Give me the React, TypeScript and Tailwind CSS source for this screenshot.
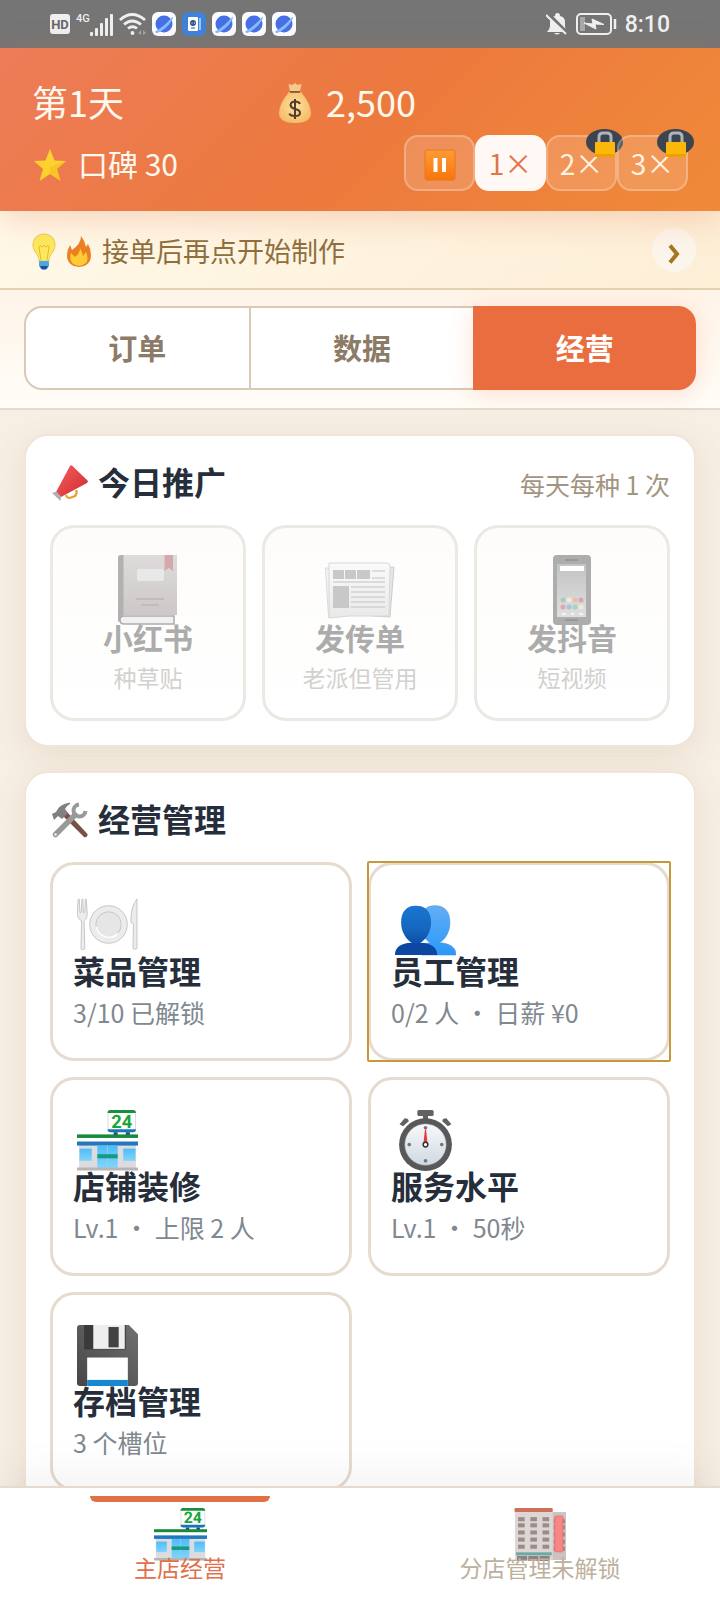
import type { ReactNode } from "react";

type IconProps = { className?: string };

const StoreIcon = ({ className }: IconProps) => (
    <svg viewBox="0 0 60 60" className={className} aria-hidden="true">
        <defs>
            <linearGradient id="storeGlass" x1="0" y1="0" x2="0" y2="1">
                <stop offset="0" stopColor="#4fbcf7" />
                <stop offset="1" stopColor="#81d4fa" />
            </linearGradient>
        </defs>
        <path d="M36 20h4v5h-4zM48 20h4v5h-4z" fill="#1b4f7d" />
        <rect x="30.500" y="0.500" width="27" height="21" rx="2.500" fill="#fff" stroke="#ddd" />
        <path d="M30 3q0-3 3-3h22q3 0 3 3z" fill="#17903b" />
        <path d="M30 19h28q0 3-3 3H33q-3 0-3-3z" fill="#1b74b8" />
        <text x="44" y="17.500" textAnchor="middle" fontSize="18" fontWeight="700" fill="#18a53a" className="font-[Roboto,sans-serif]" textRendering="geometricPrecision">24</text>
        <rect x="2" y="33" width="56" height="24" fill="#dcdce0" />
        <rect x="0" y="24" width="60" height="4" fill="#198a3b" />
        <rect x="0" y="27.500" width="60" height="4" fill="#fff" />
        <rect x="0" y="31" width="60" height="4" fill="#2178bd" />
        <rect x="2.500" y="38" width="12" height="12" fill="url(#storeGlass)" />
        <rect x="45.500" y="38" width="12" height="12" fill="url(#storeGlass)" />
        <rect x="20" y="35" width="20" height="22" fill="url(#storeGlass)" />
        <path d="M30 35v21" stroke="#82d7fb" strokeWidth="0.800" />
        <rect x="20" y="43.500" width="20" height="4" fill="#159b80" />
        <rect x="0" y="56.500" width="60" height="3" rx="0.500" fill="#b5b5b5" />
    </svg>
);

const OfficeIcon = ({ className }: IconProps) => (
    <svg viewBox="0 0 52 52" className={className} aria-hidden="true">
        <rect x="37" y="4" width="14" height="47" fill="#cbc2c1" />
        <rect x="1" y="2" width="37" height="49" fill="#ddd6d5" />
        <rect x="0.500" y="0" width="37.500" height="4" rx="1" fill="#cd7259" />
        {[9, 15, 22, 29, 36].map((y) => (
            <g key={y} fill="#9c8c89">
                <rect x="4" y={y} width="6.500" height="4" />
                <rect x="16" y={y} width="6.500" height="4" />
                <rect x="28" y={y} width="6.500" height="4" />
                <rect x="39" y={y + 2} width="11" height="4" />
            </g>
        ))}
        <rect x="40" y="8" width="8" height="35" rx="1" fill="#fa8585" stroke="#e07070" strokeWidth="0.800" />
        <rect x="2" y="43.500" width="35" height="3" fill="#69aaa4" />
        <path d="M3 47h10v5H3zM14 47h10v5H14zM25 47h10v5H25z" fill="#90807d" />
    </svg>
);

const PlateIcon = ({ className }: IconProps) => (
    <svg viewBox="0 0 60 60" className={className} aria-hidden="true">
        <g fill="#ececec" stroke="#b5b5b5" strokeWidth="0.700">
            <path d="M1 5l.5-1 .8 0 .6 13h1.400l.5-13h1l.5 13h1.400l.5-13 .8 0 1 12c.4 6-1 8-3 9.500L7.700 53q-1.900 1.500-3.800 0l.6-27.500C1.700 24 .4 22 .4 17z" />
            <circle cx="31" cy="29" r="18.500" />
            <path d="M59 4q-6.500 8-6 23l2.500 1.500-.4 24q2 2 3.900 0z" />
        </g>
        <circle cx="31" cy="29" r="12.500" fill="#e6e6e6" stroke="#c0c0c0" strokeWidth="0.800" />
        <path d="M19 31a12.500 12.500 0 0 0 21 7" fill="none" stroke="#fff" strokeWidth="1.500" />
    </svg>
);

const PeopleIcon = ({ className }: IconProps) => (
    <svg viewBox="0 0 60 60" className={className} aria-hidden="true">
        <defs>
            <linearGradient id="peopleFront" x1="0" y1="0" x2="0" y2="1">
                <stop offset="0" stopColor="#1976d2" />
                <stop offset="0.600" stopColor="#1467bd" />
                <stop offset="1" stopColor="#0e4ba8" />
            </linearGradient>
            <linearGradient id="peopleBack" x1="0" y1="0" x2="0" y2="1">
                <stop offset="0" stopColor="#63aef5" />
                <stop offset="1" stopColor="#2a98fb" />
            </linearGradient>
        </defs>
        <path d="M39 10.500c10 0 15 6 15 16.500 0 10-5 17-10.500 20 10 .5 16.500 4 16.500 12H26V48l9-1C29 44 25 37 25 27c0-10.500 5-16.500 14-16.500z" fill="url(#peopleBack)" stroke="#4a90d2" strokeWidth="0.600" />
        <path d="M20.500 10.500C30.500 10.500 35.500 16.500 35.500 27c0 10-5.500 17-10.500 20v2h-8.500v-2C11.500 44 6 37 6 27c0-10.500 5-16.500 14.500-16.500z" fill="url(#peopleFront)" />
        <path d="M16 47q4.500 2 9 0c10 .5 16.500 4 16.500 12H0c0-8 6-11.500 16-12z" fill="#0d47a1" />
    </svg>
);

const StopwatchIcon = ({ className }: IconProps) => (
    <svg viewBox="0 0 60 60" className={className} aria-hidden="true">
        <defs>
            <linearGradient id="watchFace" x1="0" y1="0" x2="0" y2="1">
                <stop offset="0" stopColor="#f7f9fb" />
                <stop offset="1" stopColor="#cfd9e2" />
            </linearGradient>
        </defs>
        <g fill="#626262">
            <rect x="22" y="0" width="16" height="6" rx="1.500" />
            <rect x="27.500" y="4" width="5" height="6" />
            <path d="M4.500 14l5-6q4 0 4 3L8 16zM55.500 14l-5-6q-4 0-4 3l5.500 5z" />
        </g>
        <circle cx="30" cy="34" r="26" fill="#585858" />
        <circle cx="30" cy="34" r="20.500" fill="url(#watchFace)" stroke="#777" strokeWidth="0.600" />
        <g fill="#757575">
            <circle cx="30" cy="17.500" r="1.800" />
            <circle cx="30" cy="50" r="1.800" />
            <circle cx="14" cy="34" r="1.800" />
            <circle cx="46" cy="34" r="1.800" />
        </g>
        <path d="M29.500 19h1l1.500 14h-4z" fill="#e53935" />
        <circle cx="30" cy="34" r="2.300" fill="#fff" stroke="#333" strokeWidth="1.500" />
    </svg>
);

const FloppyIcon = ({ className }: IconProps) => (
    <svg viewBox="0 0 60 60" className={className} aria-hidden="true">
        <defs>
            <linearGradient id="floppyBody" x1="1" y1="0" x2="0" y2="1">
                <stop offset="0" stopColor="#707070" />
                <stop offset="1" stopColor="#464646" />
            </linearGradient>
        </defs>
        <path d="M3 0h48l9 9v48q0 3-3 3H3q-3 0-3-3V3q0-3 3-3z" fill="url(#floppyBody)" />
        <rect x="7" y="0" width="41" height="24" fill="#3a3a3a" />
        <rect x="16" y="0" width="31" height="23.500" fill="#eee" />
        <rect x="31" y="2" width="10" height="20" fill="#424242" />
        <rect x="10" y="32" width="40" height="28" fill="#fff" />
        <rect x="10" y="54" width="40" height="6" fill="#1687d0" />
    </svg>
);

const BookIcon = ({ className }: IconProps) => (
    <svg viewBox="0 0 70 70" className={className} aria-hidden="true">
        <defs>
            <linearGradient id="bookCover" x1="0" y1="0" x2="0" y2="1">
                <stop offset="0" stopColor="#dedbda" />
                <stop offset="1" stopColor="#cbc6c5" />
            </linearGradient>
        </defs>
        <path d="M8 0h56v60H10l-5 6V3q0-3 3-3z" fill="url(#bookCover)" />
        <path d="M8 0h2.500v60q-4 2-3 6l-2.500 1V3q0-3 3-3z" fill="#b2b0b0" />
        <path d="M61 61H11q-4 0-4 4 0 4 4 4h50z" fill="#f1f1f1" stroke="#adadad" strokeWidth="1.500" />
        <path d="M51.500 0H60v16l-4.200-3-4.300 3z" fill="#d4a9ab" />
        <rect x="24" y="14" width="27" height="12" rx="2" fill="#e9e8e8" />
        <path d="M23 44h28M28 50h18" stroke="#b0adac" strokeWidth="1.200" />
    </svg>
);

const NewspaperIcon = ({ className }: IconProps) => (
    <svg viewBox="0 0 70 70" className={className} aria-hidden="true">
        <defs>
            <linearGradient id="paper" x1="0" y1="0" x2="0" y2="1">
                <stop offset="0" stopColor="#fafafa" />
                <stop offset="1" stopColor="#e9e9e9" />
            </linearGradient>
        </defs>
        <path d="M10 12l59 0-4 50-18-1z" fill="#e6e6e6" stroke="#cdcdcd" />
        <path d="M0.500 13l3 49 10-1V13z" fill="#f2f2f2" stroke="#dcdcdc" />
        <path d="M4 8h58q3 0 3 4l-1 47q-1 2-4 2H24L4 63z" fill="url(#paper)" stroke="#d8d8d8" />
        <path d="M8 15h11v9H8zM20 15h11v9H20zM32 15h13v9H32zM8 31h16v22H8z" fill="#c8c8c8" />
        <path d="M47 16h13M47 23h13M8 27h52M26 32h34M26 37h34M26 42h34M26 47h34M26 52h34" stroke="#c2c2c2" strokeWidth="1.200" />
    </svg>
);

const PhoneIcon = ({ className }: IconProps) => (
    <svg viewBox="0 0 70 70" className={className} aria-hidden="true">
        <defs>
            <linearGradient id="phoneScreen" x1="0" y1="0" x2="0" y2="1">
                <stop offset="0" stopColor="#c2c3c4" />
                <stop offset="1" stopColor="#dfdfdf" />
            </linearGradient>
        </defs>
        <rect x="16" y="0" width="38" height="70" rx="4" fill="#adadad" />
        <rect x="20" y="9" width="29" height="53" fill="url(#phoneScreen)" />
        <rect x="23" y="11" width="24" height="5" fill="#fff" />
        <path d="M28 5h13M28 65h13" stroke="#989898" strokeWidth="2" />
        <circle cx="26" cy="45" r="2.500" fill="#a8cdbd" />
        <circle cx="32" cy="45" r="2.500" fill="#f4ead0" />
        <circle cx="38" cy="45" r="2.500" fill="#e8bfa9" />
        <circle cx="44" cy="45" r="2.500" fill="#d9a5a8" />
        <circle cx="26" cy="52" r="2.500" fill="#dda9ad" />
        <circle cx="32" cy="52" r="2.500" fill="#a9c5d9" />
        <circle cx="38" cy="52" r="2.500" fill="#a8d0c6" />
        <circle cx="44" cy="52" r="2.500" fill="#f4ead0" />
        <path d="M25 59h4M34 59h3M42 59h4" stroke="#f4f4f4" strokeWidth="2" />
    </svg>
);

const MegaphoneIcon = ({ className }: IconProps) => (
    <svg viewBox="0 0 36 36" className={className} aria-hidden="true">
        <defs>
            <linearGradient id="megaphoneCone" x1="0" y1="0" x2="1" y2="1">
                <stop offset="0" stopColor="#f4605c" />
                <stop offset="1" stopColor="#cf2b30" />
            </linearGradient>
        </defs>
        <path d="M14 30q1 4 5 2.500l3-1q3-1 2.500-6.500" fill="none" stroke="#e2a12a" strokeWidth="2.200" />
        <path d="M18 1q1-1.500 2.500 0L35.500 15.500q1 1.500-.5 2.500L9 32l-5-5z" fill="url(#megaphoneCone)" />
        <path d="M0 28l4.500-1.500 4.500 5L8.500 36z" fill="#b0b0b0" />
    </svg>
);

const ToolsIcon = ({ className }: IconProps) => (
    <svg viewBox="0 0 36 36" className={className} aria-hidden="true">
        <path d="M11 14l4-4 20.500 22q.5 3-3 3.500z" fill="#795046" />
        <path d="M0 12l4-2q3-8 14-9.500v1.500q-4 2-5 5l3 4-6 6-4-3-4 4z" fill="#808080" />
        <path d="M3.500 32.500L23 13" stroke="#999" strokeWidth="5.500" strokeLinecap="round" />
        <path d="M27 2.500a6 6 0 1 0 6.500 6.500" fill="none" stroke="#999" strokeWidth="4" />
        <circle cx="3.500" cy="32.500" r="1.300" fill="#eee" />
    </svg>
);

const MoneyBagIcon = () => (
    <svg viewBox="0 0 34 42" className="mt-1 h-[42px] w-[34px]" aria-hidden="true">
        <defs>
            <radialGradient id="bag" cx="0.500" cy="0.450" r="0.600">
                <stop offset="0" stopColor="#ffe0a0" />
                <stop offset="1" stopColor="#f4bb62" />
            </radialGradient>
        </defs>
        <path d="M12 9L10.500 2l4 1L17 1l2.500 2 4-1L22 9z" fill="#f4cb8a" />
        <path d="M11 10h12q10 12 10 21 0 10-16 10T1 31q0-9 10-21z" fill="url(#bag)" />
        <path d="M12 10h10" stroke="#6d4c35" strokeWidth="1.500" />
        <path d="M22 22q-1-2.500-5-2.500t-4.500 3.500Q13 26 17 27q5 1 5 4t-5 3-5.500-2.500M17 17v20" fill="none" stroke="#543b2d" strokeWidth="2" />
    </svg>
);

const StarIcon = () => (
    <svg viewBox="0 0 32 32" className="mt-1 size-8" aria-hidden="true">
        <path d="M16 0l4.500 11.500L32 12l-9 8 3.500 12L16 25 5.500 32 9 20 0 12l11.500-.5z" fill="#fdd22e" />
        <path d="M16 25l10.500 7L23 20l9-8-16 6z" fill="#f3b71c" opacity="0.500" />
    </svg>
);

const BulbIcon = () => (
    <svg viewBox="0 0 24 37" className="mt-1 h-[37px] w-6" aria-hidden="true">
        <path d="M12 1c7 0 11 5 11 11 0 7-6 9-6 16H7C7 21 1 19 1 12 1 6 5 1 12 1z" fill="#fde95c" stroke="#e6cb5a" />
        <path d="M9 27L7 14q2-3 3 0 2-3 4 0 2-3 3 0l-2 13" fill="none" stroke="#e4b840" />
        <path d="M7 28h10v5l-2 3H9l-2-3z" fill="#4fa4e4" />
        <path d="M8 33h8l-2 3.500h-4z" fill="#174f9c" />
    </svg>
);

const FireIcon = () => (
    <svg viewBox="0 0 24 31" className="mt-1 h-[31px] w-6" aria-hidden="true">
        <path d="M14 0q4 5 5 11l2-3q3 5 3 11 0 11-12 12Q0 30 0 19q0-5 3-10l2 5Q14 8 14 0z" fill="#ec7f24" />
        <path d="M13 12q2 4 3 8l3-4q3 7 0 11-7 6-14 0-3-4-1-10l4 4q5-4 5-9z" fill="#fdcb36" />
    </svg>
);

const PauseIcon = () => (
    <svg viewBox="0 0 32 32" className="mt-1 size-8" aria-hidden="true">
        <defs>
            <linearGradient id="pause" x1="0" y1="0" x2="0" y2="1">
                <stop offset="0" stopColor="#ff9b35" />
                <stop offset="1" stopColor="#f97509" />
            </linearGradient>
        </defs>
        <rect x="1" y="1" width="30" height="30" rx="2" fill="url(#pause)" stroke="#e07a28" />
        <path d="M9.500 9h4v14h-4zM18 9h4v14h-4z" fill="#fff" />
    </svg>
);

const LockIcon = () => (
    <svg viewBox="0 0 20 26" className="h-[26px] w-5 shrink-0" aria-hidden="true">
        <path d="M4 12V6q0-4 4-4h4q4 0 4 4v6" fill="none" stroke="#aeb4b8" strokeWidth="3" />
        <rect x="0" y="11" width="20" height="15" rx="1" fill="#fdb708" />
        <path d="M0 23h20v2q0 1-1 1H1q-1 0-1-1z" fill="#eda000" />
    </svg>
);

const PlanetIcon = () => (
    <svg viewBox="0 0 24 24" className="size-6" aria-hidden="true">
        <rect width="24" height="24" rx="6" fill="#fbfdff" />
        <circle cx="12" cy="12" r="8.500" fill="#4670e8" />
        <path d="M3 19.500Q13 14 20.500 4.500q1 1.500-1 4.500-5 8-14 12-2 0-2.500-1.500z" fill="#86bcfb" />
    </svg>
);

const CardAppIcon = () => (
    <svg viewBox="0 0 24 24" className="size-6" aria-hidden="true">
        <rect width="24" height="24" rx="6" fill="#3f82d8" />
        <rect x="6" y="5" width="10" height="14" rx="1" fill="#fff" />
        <path d="M18 6v12" stroke="#bcdcff" strokeWidth="1.500" />
        <circle cx="11" cy="11" r="3" fill="#2d568f" />
        <path d="M9 16h4" stroke="#2d568f" />
        <path d="M9.500 11h1M12 11h1" stroke="#fff" />
    </svg>
);

const StatusBar = () => (
    <div className="flex h-12 shrink-0 items-center justify-between bg-[#757575] px-[50px] text-[#f0f0f0]">
        <div className="flex items-center gap-1.5">
            <span className="flex h-5 w-5 items-center justify-center rounded-[3px] bg-[#efefef] font-[Roboto,sans-serif] text-[13px] leading-none font-bold text-[#666]">HD</span>
            <div className="flex h-[23px] w-[37px] items-start">
                <span className="font-[Roboto,sans-serif] text-[11px] leading-none font-medium">4G</span>
                <svg viewBox="0 0 24 22" className="mt-px h-[22px] w-6 shrink-0" fill="currentColor" aria-hidden="true">
                    <rect x="0" y="18" width="3" height="4" rx="1" />
                    <rect x="5" y="14" width="3" height="8" rx="1" />
                    <rect x="10" y="9" width="3" height="13" rx="1" />
                    <rect x="15" y="4" width="3" height="18" rx="1" />
                    <rect x="20" y="0" width="3" height="22" rx="1" />
                </svg>
            </div>
            <svg viewBox="0 0 27 22" className="h-[22px] w-[27px]" fill="none" stroke="currentColor" strokeWidth="2.800" aria-hidden="true">
                <path d="M1 7q12-11 25 0M5 11.500q8-7 17 0M9 15.500q4.500-3.500 9 0" />
                <circle cx="13.500" cy="20" r="1.200" fill="currentColor" strokeWidth="1.500" />
                <path d="M19 20l3-3v5zM27 20l-3-3v5z" fill="#a5a5a5" stroke="none" />
            </svg>
            <PlanetIcon />
            <CardAppIcon />
            <PlanetIcon />
            <PlanetIcon />
            <PlanetIcon />
        </div>
        <div className="flex items-center gap-2">
            <svg viewBox="0 0 22 22" className="size-[22px]" aria-hidden="true">
                <path d="M1 19q3-3 3-6V9q0-5 5-6 0-3 2.500-3T14 3q5 1 5 6v4q0 4 2 6zM8 20h6q-3 3-6 0z" fill="currentColor" />
                <path d="M1 0l21 21" stroke="#757575" strokeWidth="4" />
                <path d="M0 2l20 19" stroke="currentColor" strokeWidth="2" />
            </svg>
            <svg viewBox="0 0 41 22" className="h-[22px] w-[41px]" aria-hidden="true">
                <rect x="1" y="1" width="34" height="20" rx="4" fill="none" stroke="currentColor" strokeWidth="2" />
                <rect x="4" y="4" width="5" height="14" fill="#a9a9a9" />
                <path d="M8 10l9 1-1-5 12 5.500-9-.5 1 5z" fill="currentColor" stroke="currentColor" />
                <path d="M39 6v10" stroke="currentColor" strokeWidth="2.500" />
            </svg>
            <span className="font-[Roboto,sans-serif] text-[23px] leading-none font-medium">8:10</span>
        </div>
    </div>
);

type SpeedButtonProps = {
    children: ReactNode;
    label: string;
    active?: boolean;
    locked?: boolean;
};

const SpeedButton = ({ children, label, active, locked }: SpeedButtonProps) => (
    <button
        type="button"
        aria-label={label}
        className={`relative flex h-14 w-[71px] items-center justify-center rounded-[14px] border-2 text-[28px] leading-none ${active ? "border-[#fff8f4] bg-[#fff8f4] text-[#e0744c]" : "border-white/25 bg-white/15 text-[#fff3e0]"}`}
    >
        {children}
        {locked && (
            <span className="absolute -top-2 -right-2 flex h-[26px] w-[37px] items-start justify-center rounded-[50%] bg-[#3b444f] pt-0.5">
                <LockIcon />
            </span>
        )}
    </button>
);

const Header = () => (
    <header className="relative z-10 shrink-0 bg-[linear-gradient(135deg,#ed7c58_0%,#ec793d_50%,#f08a39_100%)] px-8 pt-[29px] pb-5 text-[#fff8ee] shadow-[0_8px_32px_rgba(232,109,62,0.25)]">
        <div className="grid h-12 grid-cols-8 items-center text-[36px] leading-none">
            <span className="col-span-3">第1天</span>
            <span className="col-span-5 flex items-center gap-3.5">
                <MoneyBagIcon />
                2,500
            </span>
        </div>
        <div className="mt-2.5 flex items-center justify-between">
            <span className="flex items-center gap-3 pl-0.5 text-[30px] leading-none">
                <StarIcon />
                口碑 30
            </span>
            <div className="flex">
                <SpeedButton label="暂停"><PauseIcon /></SpeedButton>
                <SpeedButton label="1倍速" active>1×</SpeedButton>
                <SpeedButton label="2倍速" locked>2×</SpeedButton>
                <SpeedButton label="3倍速" locked>3×</SpeedButton>
            </div>
        </div>
    </header>
);

const TipBar = () => (
    <div className="flex h-[79px] shrink-0 items-center justify-between border-b-2 border-[#e3d2ae] bg-[linear-gradient(135deg,#fff9e8,#fdeed6)] pr-6 pl-8">
        <div className="flex items-center gap-[11px] text-[27px] leading-none text-[#8f6f3e]">
            <BulbIcon />
            <FireIcon />
            <span className="pt-0.5">接单后再点开始制作</span>
        </div>
        <button type="button" aria-label="下一条" className="flex size-11 items-center justify-center rounded-full bg-[#fcf5ec]">
            <svg viewBox="0 0 12 20" className="mt-2 h-5 w-3" fill="none" stroke="#a5761f" strokeWidth="4" aria-hidden="true">
                <path d="M2 1.500l7 8.500-7 8.500" />
            </svg>
        </button>
    </div>
);

const Tabs = () => (
    <div className="shrink-0 border-b-2 border-[#e5dacd] bg-linear-to-b from-[#fff4e8] to-[#fffdf8] px-6 pt-4 pb-[18px]">
        <div role="tablist" className="flex h-21 text-[29px] font-bold text-[#8c7b66]">
            <button type="button" role="tab" aria-selected="false" className="flex-1 rounded-l-[18px] border-2 border-[#dac9b4] bg-white">订单</button>
            <button type="button" role="tab" aria-selected="false" className="flex-1 border-y-2 border-[#dac9b4] bg-white">数据</button>
            <button type="button" role="tab" aria-selected="true" className="flex-1 rounded-r-[18px] bg-[#e96d3f] text-white shadow-[0_4px_24px_rgba(233,109,63,0.2)]">经营</button>
        </div>
    </div>
);

type PanelProps = {
    icon: ReactNode;
    title: string;
    note?: string;
    children: ReactNode;
};

const Panel = ({ icon, title, note, children }: PanelProps) => (
    <section className="shrink-0 rounded-3xl border-2 border-[#efe5da] bg-white px-6 pt-[25px] pb-6 shadow-[0_8px_32px_rgba(140,100,60,0.12)]">
        <div className="flex h-10 items-center justify-between">
            <h2 className="flex items-center gap-2.5 pl-0.5 text-[32px] leading-none font-bold text-[#252e3a]">
                {icon}
                {title}
            </h2>
            {note && <span className="pt-1.5 text-[25px] leading-none text-[#a29480]">{note}</span>}
        </div>
        {children}
    </section>
);

const promotions = [
    { name: "小红书", desc: "种草贴", Icon: BookIcon },
    { name: "发传单", desc: "老派但管用", Icon: NewspaperIcon },
    { name: "发抖音", desc: "短视频", Icon: PhoneIcon },
];

const managements = [
    { name: "菜品管理", desc: "3/10 已解锁", Icon: PlateIcon },
    { name: "员工管理", desc: "0/2 人 · 日薪 ¥0", Icon: PeopleIcon, highlight: true },
    { name: "店铺装修", desc: "Lv.1 · 上限 2 人", Icon: StoreIcon },
    { name: "服务水平", desc: "Lv.1 · 50秒", Icon: StopwatchIcon },
    { name: "存档管理", desc: "3 个槽位", Icon: FloppyIcon },
];

const BottomNav = () => (
    <nav className="relative z-10 grid shrink-0 grid-cols-2 border-t-2 border-[#e6dacd] bg-white text-[23px] leading-6 shadow-[0_-8px_48px_rgba(0,0,0,0.06)]">
        <a href="#main" className="flex flex-col items-center pt-2 pb-[21px] text-[#e07048]">
            <span className="h-1.5 w-1/2 rounded-b-md bg-[#e17145]" />
            <StoreIcon className="mt-1.5 size-[53px]" />
            <span className="-mt-1.5">主店经营</span>
        </a>
        <a href="#branch" className="flex flex-col items-center pt-5 pb-[21px] text-[#bdb09d]">
            <OfficeIcon className="size-[53px]" />
            <span className="-mt-1.5">分店管理未解锁</span>
        </a>
    </nav>
);

export default function App() {
    return (
        <div lang="zh-CN" className="flex h-screen flex-col overflow-hidden bg-[#f7efe4] font-['Noto_Sans_CJK_SC',sans-serif]">
            <StatusBar />
            <Header />
            <TipBar />
            <Tabs />
            <main className="flex min-h-0 flex-1 flex-col gap-6 overflow-hidden p-6">
                <Panel icon={<MegaphoneIcon className="mt-1 size-9" />} title="今日推广" note="每天每种 1 次">
                    <div className="mt-6 grid grid-cols-3 gap-4">
                        {promotions.map(({ name, desc, Icon }) => (
                            <button key={name} type="button" disabled className="flex flex-col items-center rounded-3xl border-3 border-[#ece8e3] bg-linear-to-b from-[#fdfcfa] to-white pt-[27px] pb-[26px]">
                                <Icon className="size-[70px]" />
                                <span className="-mt-[3px] text-[30px] leading-[30px] font-bold text-[#acacac]">{name}</span>
                                <span className="mt-2.5 text-[23px] leading-[30px] text-[#d2d1cf]">{desc}</span>
                            </button>
                        ))}
                    </div>
                </Panel>
                <Panel icon={<ToolsIcon className="mt-1 size-9" />} title="经营管理">
                    <div className="mt-6 grid grid-cols-2 gap-4">
                        {managements.map(({ name, desc, Icon, highlight }) => (
                            <button key={name} type="button" className="relative flex flex-col items-start rounded-3xl border-3 border-[#e6dbcf] bg-white px-5 pt-[30px] pb-[30px] text-left">
                                <Icon className="ml-1 size-[61px]" />
                                <span className="-mt-0.5 text-[32px] leading-8 font-bold text-[#252e3a]">{name}</span>
                                <span className="mt-2.5 text-[25px] leading-8 text-[#808890]">{desc}</span>
                                {highlight && <span className="absolute -inset-1 rounded-xs border-2 border-[#c8993a]" />}
                            </button>
                        ))}
                    </div>
                </Panel>
            </main>
            <BottomNav />
        </div>
    );
}
